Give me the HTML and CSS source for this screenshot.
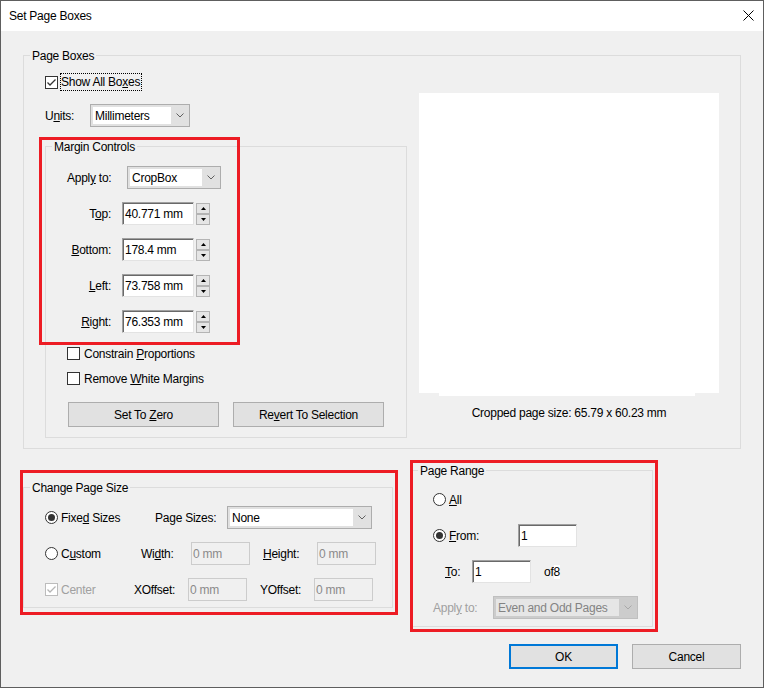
FILE: index.html
```html
<!DOCTYPE html>
<html>
<head>
<meta charset="utf-8">
<title>Set Page Boxes</title>
<link rel="stylesheet" href="styles.css">
</head>
<body>
<div class="window">
  <div class="titlebar">
    <span class="title">Set Page Boxes</span>
    <svg class="close" width="11" height="11" viewBox="0 0 11 11"><path d="M0.5 0.5 L10.5 10.5 M10.5 0.5 L0.5 10.5" stroke="#000" stroke-width="1" fill="none"/></svg>
  </div>
  <div class="client">
    <fieldset class="group page-boxes">
      <legend>Page Boxes</legend>
      <div class="pb-body">
        <div class="pb-left">
          <div class="show-row">
            <span class="cb"><svg width="11" height="11" viewBox="0 0 11 11"><polyline points="1.5,5.5 4,8 9.5,2.5" fill="none" stroke="#333" stroke-width="1.3"/></svg></span>
            <span class="focus">Show All Bo<u>x</u>es</span>
          </div>
          <div class="units-row">
            <span class="units-lbl">U<u>n</u>its:</span>
            <div class="combo w100">
              <span class="field">Millimeters</span>
              <span class="arrow"><svg width="8" height="5" viewBox="0 0 8 5"><polyline points="0.5,0.5 4,4 7.5,0.5" fill="none" stroke="#606060" stroke-width="1"/></svg></span>
            </div>
          </div>
          <fieldset class="group margins">
            <legend>Margin Controls</legend>
            <div class="mc-body">
              <div class="apply-row">
                <span class="apply-lbl">Appl<u>y</u> to:</span>
                <div class="combo w94">
                  <span class="field">CropBox</span>
                  <span class="arrow"><svg width="8" height="5" viewBox="0 0 8 5"><polyline points="0.5,0.5 4,4 7.5,0.5" fill="none" stroke="#606060" stroke-width="1"/></svg></span>
                </div>
              </div>
              <div class="mrow">
                <span class="mlbl">T<u>o</u>p:</span>
                <span class="input w72">40.771 mm</span>
                <span class="spin"><span class="sbtn"><svg width="5" height="3" viewBox="0 0 5 3"><polygon points="0,3 2.5,0 5,3" fill="#000"/></svg></span><span class="sbtn"><svg width="5" height="3" viewBox="0 0 5 3"><polygon points="0,0 5,0 2.5,3" fill="#000"/></svg></span></span>
              </div>
              <div class="mrow">
                <span class="mlbl"><u>B</u>ottom:</span>
                <span class="input w72">178.4 mm</span>
                <span class="spin"><span class="sbtn"><svg width="5" height="3" viewBox="0 0 5 3"><polygon points="0,3 2.5,0 5,3" fill="#000"/></svg></span><span class="sbtn"><svg width="5" height="3" viewBox="0 0 5 3"><polygon points="0,0 5,0 2.5,3" fill="#000"/></svg></span></span>
              </div>
              <div class="mrow">
                <span class="mlbl"><u>L</u>eft:</span>
                <span class="input w72">73.758 mm</span>
                <span class="spin"><span class="sbtn"><svg width="5" height="3" viewBox="0 0 5 3"><polygon points="0,3 2.5,0 5,3" fill="#000"/></svg></span><span class="sbtn"><svg width="5" height="3" viewBox="0 0 5 3"><polygon points="0,0 5,0 2.5,3" fill="#000"/></svg></span></span>
              </div>
              <div class="mrow">
                <span class="mlbl"><u>R</u>ight:</span>
                <span class="input w72">76.353 mm</span>
                <span class="spin"><span class="sbtn"><svg width="5" height="3" viewBox="0 0 5 3"><polygon points="0,3 2.5,0 5,3" fill="#000"/></svg></span><span class="sbtn"><svg width="5" height="3" viewBox="0 0 5 3"><polygon points="0,0 5,0 2.5,3" fill="#000"/></svg></span></span>
              </div>
              <div class="chk-row first">
                <span class="cb"></span>
                <span class="chk-txt">Constrain <u>P</u>roportions</span>
              </div>
              <div class="chk-row second">
                <span class="cb"></span>
                <span class="chk-txt">Remove <u>W</u>hite Margins</span>
              </div>
              <div class="btn-row">
                <button class="btn wide">Set To <u>Z</u>ero</button>
                <button class="btn wide">Re<u>v</u>ert To Selection</button>
              </div>
            </div>
          </fieldset>
        </div>
        <div class="pb-right">
          <div class="preview"></div>
          <div class="preview-strip"></div>
          <div class="caption">Cropped page size: 65.79 x 60.23 mm</div>
        </div>
      </div>
    </fieldset>

    <div class="lower">
      <fieldset class="group page-size">
        <legend>Change Page Size</legend>
        <div class="cps-body">
          <div class="crow">
            <span class="opt w110"><span class="rb on"></span><span class="txt">Fixe<u>d</u> Sizes</span></span>
            <span class="clbl w72">Pa<u>g</u>e Sizes:</span>
            <div class="combo w145">
              <span class="field">None</span>
              <span class="arrow"><svg width="8" height="5" viewBox="0 0 8 5"><polyline points="0.5,0.5 4,4 7.5,0.5" fill="none" stroke="#606060" stroke-width="1"/></svg></span>
            </div>
          </div>
          <div class="crow">
            <span class="opt w96"><span class="rb"></span><span class="txt">C<u>u</u>stom</span></span>
            <span class="clbl w50">Wi<u>d</u>th:</span>
            <span class="dinput">0 mm</span>
            <span class="clbl w54 ml13"><u>H</u>eight:</span>
            <span class="dinput">0 mm</span>
          </div>
          <div class="crow">
            <span class="opt w89"><span class="cb dis"><svg width="11" height="11" viewBox="0 0 11 11"><polyline points="1.5,5.5 4,8 9.5,2.5" fill="none" stroke="#b5b5b5" stroke-width="1.3"/></svg></span><span class="txt gray">Center</span></span>
            <span class="clbl w54">XOffset:</span>
            <span class="dinput">0 mm</span>
            <span class="clbl w54 ml13">YOffset:</span>
            <span class="dinput">0 mm</span>
          </div>
        </div>
      </fieldset>

      <fieldset class="group page-range">
        <legend>Page Range</legend>
        <div class="pr-body">
          <div class="prow">
            <span class="opt"><span class="rb"></span><span class="txt"><u>A</u>ll</span></span>
          </div>
          <div class="prow">
            <span class="opt w85"><span class="rb on"></span><span class="txt"><u>F</u>rom:</span></span>
            <span class="input w59">1</span>
          </div>
          <div class="prow indent">
            <span class="plbl w27"><u>T</u>o:</span>
            <span class="input w59">1</span>
            <span class="of">of<span class="eight">8</span></span>
          </div>
          <div class="prow">
            <span class="plbl w60 gray">Appl<u>y</u> to:</span>
            <div class="combo w145 disabled">
              <span class="field">Even and Odd Pages</span>
              <span class="arrow"><svg width="8" height="5" viewBox="0 0 8 5"><polyline points="0.5,0.5 4,4 7.5,0.5" fill="none" stroke="#a8a8a8" stroke-width="1"/></svg></span>
            </div>
          </div>
        </div>
      </fieldset>
    </div>

    <div class="actions">
      <button class="btn action ok">OK</button>
      <button class="btn action">Cancel</button>
    </div>
  </div>

  <div class="mark mark-margins"></div>
  <div class="mark mark-size"></div>
  <div class="mark mark-range"></div>
</div>
</body>
</html>
```

FILE: styles.css
```css
* {
  box-sizing: border-box;
}

html, body {
  margin: 0;
  padding: 0;
}

body {
  font-family: "Liberation Sans", Arial, sans-serif;
  font-size: 12px;
  letter-spacing: -0.25px;
  color: #000;
  background: #f0f0f0;
}

u {
  text-decoration: underline;
  text-underline-offset: 1px;
}

.window {
  position: relative;
  width: 764px;
  height: 688px;
  border: 1px solid #5e5e5e;
  background: #f0f0f0;
  display: flex;
  flex-direction: column;
}

.titlebar {
  height: 30px;
  flex: none;
  background: #fff;
  display: flex;
  align-items: center;
  justify-content: space-between;
  padding: 0 9px 0 8px;
}

.title {
  line-height: 30px;
}

.close {
  display: block;
  margin-top: -1px;
}

.client {
  flex: 1;
  padding: 0 22px;
  display: flex;
  flex-direction: column;
}

/* group boxes */
.group {
  margin: 0;
  padding: 0;
  min-width: 0;
  border: 1px solid #dcdcdc;
}

.group > legend {
  margin-left: 6px;
  padding: 1px 2px 0;
  line-height: 14px;
  height: 15px;
}

.page-boxes {
  margin-top: 17px;
  width: 718px;
  height: 401px;
  flex: none;
}

.pb-body {
  display: flex;
  padding: 10px 0 0 21px;
}

.pb-left {
  width: 362px;
  display: flex;
  flex-direction: column;
}

.show-row {
  display: flex;
  align-items: center;
  height: 18px;
}

.cb {
  width: 13px;
  height: 13px;
  flex: none;
  border: 1px solid #333;
  background: #fff;
  display: flex;
}

.cb svg {
  display: block;
}

.cb.dis {
  border-color: #bcbcbc;
}

.focus {
  margin-left: 2px;
  border: 1px dotted #000;
  padding: 1px 1px 0 0;
  line-height: 15px;
}

.units-row {
  margin-top: 13px;
  display: flex;
  align-items: center;
  height: 23px;
}

.units-lbl {
  width: 45px;
  padding-top: 1px;
}

/* combo box */
.combo {
  display: flex;
  height: 23px;
  border: 1px solid #adadad;
  background: #e1e1e1;
  padding: 2px 0 2px 2px;
  flex: none;
}

.combo .field {
  flex: 1;
  background: #fff;
  padding: 1px 0 0 2px;
  line-height: 16px;
  white-space: nowrap;
}

.combo .arrow {
  width: 18px;
  flex: none;
  display: flex;
  align-items: center;
  justify-content: center;
}

.combo .arrow svg {
  display: block;
}

.combo.disabled {
  border-color: #bfbfbf;
  background: #cccccc;
}

.combo.disabled .field {
  background: #e6e6e6;
  color: #838383;
}

.w100 { width: 100px; }
.w94 { width: 94px; }
.w145 { width: 145px; }
.w72 { width: 72px; }
.w59 { width: 59px; }

/* margin controls */
.margins {
  margin-top: 12px;
  width: 362px;
  height: 299px;
}

.mc-body {
  padding: 12px 0 0 21px;
  display: flex;
  flex-direction: column;
}

.apply-row {
  display: flex;
  align-items: center;
  height: 23px;
}

.apply-lbl {
  width: 60px;
  padding-top: 1px;
}

.mrow {
  margin-top: 13px;
  display: flex;
  align-items: flex-start;
  height: 23px;
}

.mlbl {
  width: 44px;
  margin-right: 11px;
  text-align: right;
  line-height: 23px;
  padding-top: 1px;
}

.input {
  height: 23px;
  background: #fff;
  border: 1px solid;
  border-color: #a0a0a0 #e3e3e3 #e3e3e3 #a0a0a0;
  box-shadow: inset 1px 1px 0 #696969;
  padding: 1px 0 0 2px;
  line-height: 20px;
  white-space: nowrap;
  flex: none;
}

.spin {
  margin: 1px 0 0 2px;
  width: 14px;
  height: 22px;
  display: flex;
  flex-direction: column;
}

.sbtn {
  height: 11px;
  border: 1px solid #b4b4b4;
  background: #e5e5e5;
  display: flex;
  align-items: center;
  justify-content: center;
}

.sbtn svg {
  display: block;
}

.chk-row {
  display: flex;
  align-items: center;
  height: 15px;
}

.chk-row.first {
  margin-top: 13px;
}

.chk-row.second {
  margin-top: 10px;
}

.chk-txt {
  margin-left: 4px;
  padding-top: 1px;
}

.btn-row {
  margin-top: 16px;
  padding-left: 1px;
  display: flex;
  gap: 14px;
}

.btn {
  height: 25px;
  border: 1px solid #adadad;
  background: #e1e1e1;
  font: inherit;
  letter-spacing: inherit;
  color: #000;
  padding: 1px 0 0;
  margin: 0;
}

.btn.wide {
  width: 151px;
}

/* preview */
.pb-right {
  margin-left: 12px;
  margin-top: 20px;
  display: flex;
  flex-direction: column;
}

.preview {
  width: 300px;
  height: 300px;
  background: #fff;
}

.preview-strip {
  width: 256px;
  height: 3px;
  margin-left: 20px;
  background: #fff;
}

.caption {
  width: 300px;
  margin-top: 9px;
  line-height: 16px;
  text-align: center;
}

/* lower section */
.lower {
  margin-top: 14px;
  display: flex;
  align-items: flex-start;
  gap: 18px;
}

.page-size {
  margin-top: 17px;
  width: 370px;
  height: 128px;
}

.cps-body {
  padding: 11px 0 0 21px;
  display: flex;
  flex-direction: column;
  gap: 13px;
}

.crow {
  display: flex;
  align-items: center;
  height: 23px;
}

.opt {
  display: flex;
  align-items: center;
  flex: none;
}

.opt .txt {
  margin-left: 3px;
  padding-top: 1px;
}

.w110 { width: 110px; }
.w96 { width: 96px; }
.w89 { width: 89px; }
.w85 { width: 85px; }
.w72.clbl { width: 72px; }
.w50 { width: 50px; }
.w54 { width: 54px; }
.w27 { width: 27px; }
.w60 { width: 60px; }
.ml13 { margin-left: 13px; }

.clbl,
.plbl {
  flex: none;
  white-space: nowrap;
  padding-top: 1px;
}

.rb {
  position: relative;
  width: 13px;
  height: 13px;
  flex: none;
  border: 1px solid #333;
  border-radius: 50%;
  background: #fff;
}

.rb.on::after {
  content: "";
  position: absolute;
  left: 2px;
  top: 2px;
  width: 7px;
  height: 7px;
  border-radius: 50%;
  background: #333;
}

.gray {
  color: #a0a0a0;
}

.dinput {
  width: 59px;
  height: 23px;
  flex: none;
  border: 1px solid #cccccc;
  background: #f0f0f0;
  color: #8a8a8a;
  padding: 1px 0 0 1px;
  line-height: 20px;
  white-space: nowrap;
}

.page-range {
  width: 242px;
  height: 164px;
}

.pr-body {
  padding: 10px 0 0 21px;
  display: flex;
  flex-direction: column;
  gap: 13px;
}

.prow {
  display: flex;
  align-items: center;
  height: 23px;
}

.prow.indent {
  padding-left: 12px;
}

.of {
  margin-left: 13px;
  padding-top: 1px;
}

.eight {
  background: #fff;
}

/* dialog buttons */
.actions {
  margin-top: 17px;
  display: flex;
  justify-content: flex-end;
  gap: 14px;
}

.btn.action {
  width: 109px;
}

.btn.ok {
  border: 2px solid #0078d7;
}

/* red annotation rectangles */
.mark {
  position: absolute;
  border: 3px solid #ed1c24;
  pointer-events: none;
}

.mark-margins {
  left: 38px;
  top: 136px;
  width: 201px;
  height: 208px;
}

.mark-size {
  left: 19px;
  top: 469px;
  width: 378px;
  height: 145px;
}

.mark-range {
  left: 409px;
  top: 459px;
  width: 248px;
  height: 172px;
}
```
